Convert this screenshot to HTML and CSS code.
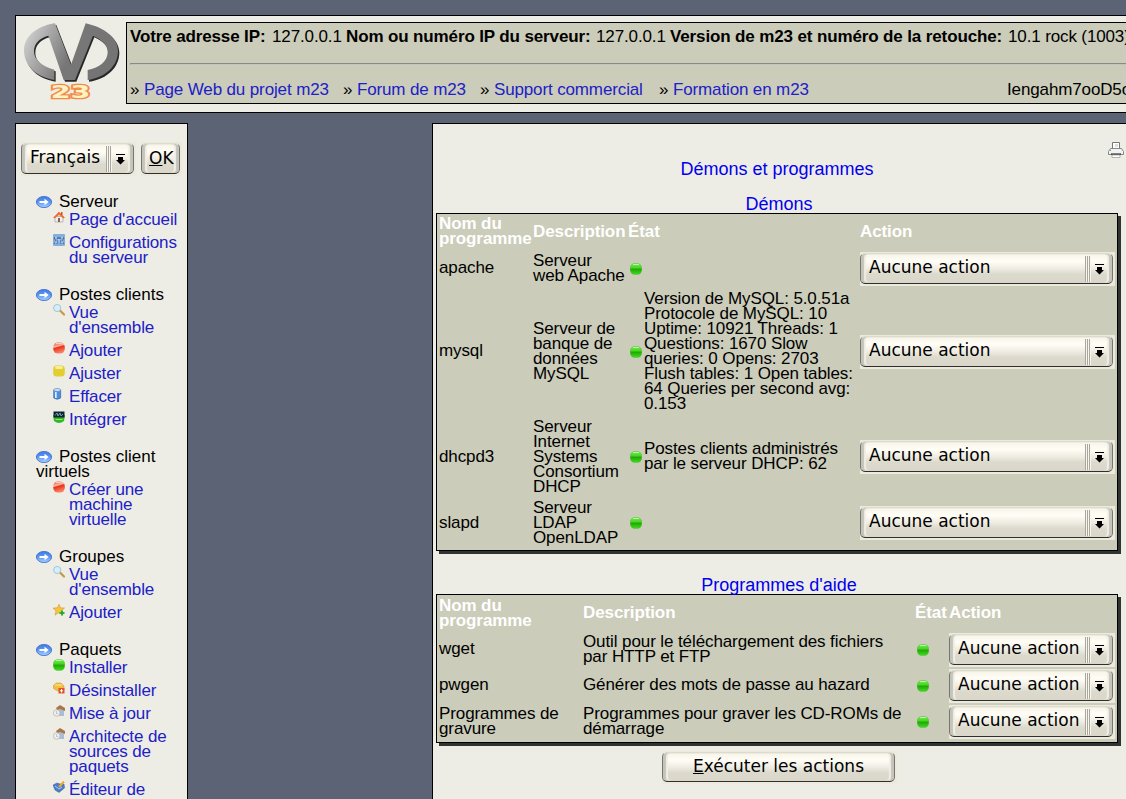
FILE: index.html
```html
<!DOCTYPE html>
<html lang="fr">
<head>
<meta charset="utf-8">
<title>m23 - Démons et programmes</title>
<link rel="stylesheet" href="styles.css">
</head>
<body>
<svg width="0" height="0" class="defs">
  <defs>
    <linearGradient id="gg" x2="0" y2="1"><stop offset="0" stop-color="#7be85e"/><stop offset=".42" stop-color="#45d41c"/><stop offset=".5" stop-color="#1fa604"/><stop offset="1" stop-color="#42dc22"/></linearGradient>
    <linearGradient id="rg" x2=".3" y2="1"><stop offset="0" stop-color="#e8553c"/><stop offset=".42" stop-color="#f6b5a6"/><stop offset=".52" stop-color="#ee3013"/><stop offset="1" stop-color="#f6836b"/></linearGradient>
    <linearGradient id="bg" x2="0" y2="1"><stop offset="0" stop-color="#3f7ce8"/><stop offset=".5" stop-color="#5b96f4"/><stop offset="1" stop-color="#a9d4ff"/></linearGradient>
    <linearGradient id="lg" x2="1" y2=".3"><stop offset="0" stop-color="#dcdcdc"/><stop offset=".3" stop-color="#a8a8a8"/><stop offset=".6" stop-color="#777"/><stop offset="1" stop-color="#747474"/></linearGradient>
    <symbol id="arrow" viewBox="0 0 16 12"><ellipse cx="8" cy="6" rx="7.6" ry="5.6" fill="url(#bg)" stroke="#3566c4" stroke-width=".8"/><path d="M3.500 5h5V2.800L12.700 6 8.500 9.200V7h-5z" fill="#fff"/></symbol>
    <symbol id="green" viewBox="0 0 12 12"><rect x=".2" y=".4" width="11.600" height="11.200" rx="4.800" fill="url(#gg)" stroke="#3cbf22" stroke-width=".4"/><path d="M3 1.500h6" stroke="#b5f5a4"/></symbol>
    <symbol id="red" viewBox="0 0 12 12"><rect x=".2" y=".4" width="11.600" height="11.200" rx="4.800" fill="url(#rg)"/><path d="M3 1.500h6" stroke="#f9c9be"/></symbol>
    <symbol id="yellow" viewBox="0 0 12 12"><rect x=".2" y=".4" width="11.600" height="11.200" rx="3.500" fill="#e2ce2f"/><rect x="2" y="1" width="8" height="3" rx="1.500" fill="#f4eca0"/></symbol>
    <symbol id="home" viewBox="0 0 12 12"><path d="M2 5.500h8V11H2z" fill="#eee" stroke="#999" stroke-width=".6"/><path d="M.5 6.500 6 1l5.500 5.500-1.300.6L6 3.500 1.800 7.100z" fill="#ee6a32" stroke="#ee6a32" stroke-width=".6"/><path d="M8 1h1.500v3H8z" fill="#d5501c"/><path d="M5 7h2v4H5z" fill="#865"/></symbol>
    <symbol id="config" viewBox="0 0 12 12"><rect width="12" height="12" rx="1" fill="#86aedb"/><path d="M1 10 3 7 1 4l2-2 2 3 1-2 1 2 2-3 2 2-2 3 2 3M4 10V7h4v3" fill="none" stroke="#476da6"/><path d="M2 3h2M8 3h2M2 8h2M8 8h2M6 5v3" stroke="#dfeeff"/></symbol>
    <symbol id="lens" viewBox="0 0 12 12"><path d="m7 6.500 4 4" stroke="#c99447" stroke-width="2.200" stroke-linecap="round"/><circle cx="4.200" cy="4" r="3.600" fill="#d2effc" stroke="#a5bccd" stroke-width=".9"/></symbol>
    <symbol id="bin" viewBox="0 0 12 12"><path d="M.7 2v8q3.400 2.500 7 0V2z" fill="#4e8ee0" stroke="#315b9e" stroke-width=".6"/><path d="M2 4h1.700v6H2z" fill="#d9efff"/><ellipse cx="4.200" cy="2" rx="3.500" ry="1.500" fill="#cde2f6" stroke="#4977b1" stroke-width=".6"/></symbol>
    <symbol id="robot" viewBox="0 0 12 12"><path d="M0 4h12L11 10Q6 14 1 10z" fill="#31b62a"/><path d="M.5.5h11v6h-11z" fill="#123"/><path d="M2 4.500 4 2l1 3 2-3 1 3 2-2" fill="none" stroke="#6fa4b4"/><path d="M2.500 8.500h7" stroke="#8ced4e"/></symbol>
    <symbol id="star" viewBox="0 0 12 12"><path d="m6 .3 1.500 3.500 4 .2-3 2.600 1 4L6 8.500l-4 2.600 1-4.200L0 4.100l4.300-.3z" fill="#f5c63b" stroke="#c29030" stroke-width=".5"/><path d="M9 6.500v5M6.500 9h5" stroke="#2dac27" stroke-width="2"/></symbol>
    <symbol id="remove" viewBox="0 0 12 12"><path d="M0 4 3 1h5l3 3v4l-6 1-4-2z" fill="#f0bf43" stroke="#c99321" stroke-width=".5"/><path d="M2 3h7" stroke="#ffe791"/><path d="M5.500 6h6v5.500h-6z" fill="#e0522e"/><path d="M8.500 7v3.500M7 8.800h3" stroke="#fff"/></symbol>
    <symbol id="box" viewBox="0 0 12 12"><path d="M5 4h6v7H5z" fill="#a9bdd8"/><path d="m3 3 4-3 5 3v3L7 4 4 5z" fill="#a97646"/><circle cx="3.700" cy="8" r="3.300" fill="#eee" stroke="#aaa" stroke-width=".6"/><path d="M3.500 6v2.500h1.600" fill="none" stroke="#aaa" stroke-width=".6"/></symbol>
    <symbol id="edit" viewBox="0 0 12 12"><path d="m0 4 4-2 3 1 4 0 .5 4L6 11.500 2 9z" fill="#4d7dc6" stroke="#345a96" stroke-width=".5"/><path d="m2 5 4 3 3-2" fill="none" stroke="#a7cafa"/><path d="M6 6 11 .5" stroke="#f1a52b" stroke-width="2"/></symbol>
  </defs>
</svg>
<header class="top">
  <svg class="logo" viewBox="0 0 345 285">
    <defs><path id="mark" d="M118 25C60 35 27 68 27 106C27 150 60 185 118 195V164C80 154 57 134 57 109C57 86 72 70 100 62L146 195H180L234 62C263 75 278 92 278 112C278 140 250 160 218 165V195C275 187 309 150 309 108C309 70 270 38 212 25L168 149L120 25Z"/></defs>
    <use href="#mark" x="4" y="5" fill="#282828"/><use href="#mark" fill="url(#lg)"/>
    <text class="logo-number" x="107" y="248" textLength="119" lengthAdjust="spacingAndGlyphs">23</text>
  </svg>
  <div class="info">
    <div class="server"><b class="w142">Votre adresse IP:</b><span class="w74">127.0.0.1</span><b class="w250">Nom ou numéro IP du serveur:</b><span class="w74">127.0.0.1</span><b class="w338">Version de m23 et numéro de la retouche:</b><span>10.1 rock (1003)</span></div>
    <hr>
    <nav class="links"><span class="w213">» <a>Page Web du projet m23</a></span><span class="w137">» <a>Forum de m23</a></span><span class="w179">» <a>Support commercial</a></span><span class="w348">» <a>Formation en m23</a></span><span>Iengahm7ooD5oo</span></nav>
  </div>
</header>
<div class="body">
  <aside class="side">
    <div class="lang">
      <div class="select lang-select"><span class="button"><span class="label">Français</span><svg class="grip" viewBox="0 0 28 31"><path d="M.5 3v26M2.500 3v26M4.500 3v26" stroke="#a8a69d"/><path d="M1.500 3v26M3.500 3v26M5.500 3v26" stroke="#f8f6ee"/><path d="M10 11h9v1h-9zM12 14h5v3h2l-4.500 4.500L10 17h2z"/></svg></span></div>
      <div class="select ok"><span class="button"><span class="label"><u>O</u>K</span></span></div>
    </div>
    <section><h3><svg><use href="#arrow"/></svg>Serveur</h3><ul>
      <li><svg><use href="#home"/></svg><a>Page d'accueil</a></li>
      <li><svg><use href="#config"/></svg><a>Configurations<br>du serveur</a></li></ul></section>
    <section><h3><svg><use href="#arrow"/></svg>Postes clients</h3><ul>
      <li><svg><use href="#lens"/></svg><a>Vue<br>d'ensemble</a></li>
      <li><svg><use href="#red"/></svg><a>Ajouter</a></li>
      <li><svg><use href="#yellow"/></svg><a>Ajuster</a></li>
      <li><svg><use href="#bin"/></svg><a>Effacer</a></li>
      <li><svg><use href="#robot"/></svg><a>Intégrer</a></li></ul></section>
    <section><h3><svg><use href="#arrow"/></svg>Postes client<br>virtuels</h3><ul>
      <li><svg><use href="#red"/></svg><a>Créer une<br>machine<br>virtuelle</a></li></ul></section>
    <section><h3><svg><use href="#arrow"/></svg>Groupes</h3><ul>
      <li><svg><use href="#lens"/></svg><a>Vue<br>d'ensemble</a></li>
      <li><svg><use href="#star"/></svg><a>Ajouter</a></li></ul></section>
    <section><h3><svg><use href="#arrow"/></svg>Paquets</h3><ul>
      <li><svg><use href="#green"/></svg><a>Installer</a></li>
      <li><svg><use href="#remove"/></svg><a>Désinstaller</a></li>
      <li><svg><use href="#box"/></svg><a>Mise à jour</a></li>
      <li><svg><use href="#box"/></svg><a>Architecte de<br>sources de<br>paquets</a></li>
      <li><svg><use href="#edit"/></svg><a>Éditeur de<br>paquets</a></li></ul></section>
  </aside>
  <main class="main">
    <svg class="printer" viewBox="0 0 16 16"><path d="M4.500.5h7V7h-7z" fill="#fff" stroke="#777"/><path d="M7 2h3v3H7z" fill="#ddd"/><path d="M2.500 6.500h11l2 3v3H.5v-3z" fill="#f2f2f2" stroke="#888"/><path d="M3 12h10" stroke="#111"/><path d="M4 13h8v2.500H4z" fill="#fff" stroke="#999" stroke-width=".7"/><path d="M2 8h1v1H2z" fill="#4c3"/></svg>
    <h1>Démons et programmes</h1>
    <h2 class="first">Démons</h2>
    <div class="table daemons">
      <div class="row head"><span>Nom du<br>programme</span><span>Description</span><span>État</span><span></span><span>Action</span></div>
      <div class="row"><span>apache</span><span>Serveur<br>web Apache</span><svg class="dot"><use href="#green"/></svg><span></span><div class="select"><span class="button"><span class="label">Aucune action</span><svg class="grip" viewBox="0 0 28 31"><path d="M.5 3v26M2.500 3v26M4.500 3v26" stroke="#a8a69d"/><path d="M1.500 3v26M3.500 3v26M5.500 3v26" stroke="#f8f6ee"/><path d="M10 11h9v1h-9zM12 14h5v3h2l-4.500 4.500L10 17h2z"/></svg></span></div></div>
      <div class="row"><span>mysql</span><span>Serveur de<br>banque de<br>données<br>MySQL</span><svg class="dot"><use href="#green"/></svg><span>Version de MySQL: 5.0.51a<br>Protocole de MySQL: 10<br>Uptime: 10921 Threads: 1<br>Questions: 1670 Slow<br>queries: 0 Opens: 2703<br>Flush tables: 1 Open tables:<br>64 Queries per second avg:<br>0.153</span><div class="select"><span class="button"><span class="label">Aucune action</span><svg class="grip" viewBox="0 0 28 31"><path d="M.5 3v26M2.500 3v26M4.500 3v26" stroke="#a8a69d"/><path d="M1.500 3v26M3.500 3v26M5.500 3v26" stroke="#f8f6ee"/><path d="M10 11h9v1h-9zM12 14h5v3h2l-4.500 4.500L10 17h2z"/></svg></span></div></div>
      <div class="row raised"><span>dhcpd3</span><span>Serveur<br>Internet<br>Systems<br>Consortium<br>DHCP</span><svg class="dot"><use href="#green"/></svg><span>Postes clients administrés<br>par le serveur DHCP: 62</span><div class="select"><span class="button"><span class="label">Aucune action</span><svg class="grip" viewBox="0 0 28 31"><path d="M.5 3v26M2.500 3v26M4.500 3v26" stroke="#a8a69d"/><path d="M1.500 3v26M3.500 3v26M5.500 3v26" stroke="#f8f6ee"/><path d="M10 11h9v1h-9zM12 14h5v3h2l-4.500 4.500L10 17h2z"/></svg></span></div></div>
      <div class="row raised"><span>slapd</span><span>Serveur<br>LDAP<br>OpenLDAP</span><svg class="dot"><use href="#green"/></svg><span></span><div class="select"><span class="button"><span class="label">Aucune action</span><svg class="grip" viewBox="0 0 28 31"><path d="M.5 3v26M2.500 3v26M4.500 3v26" stroke="#a8a69d"/><path d="M1.500 3v26M3.500 3v26M5.500 3v26" stroke="#f8f6ee"/><path d="M10 11h9v1h-9zM12 14h5v3h2l-4.500 4.500L10 17h2z"/></svg></span></div></div>
    </div>
    <h2 class="second">Programmes d'aide</h2>
    <div class="table helpers">
      <div class="row head"><span>Nom du<br>programme</span><span>Description</span><span>État</span><span>Action</span></div>
      <div class="row"><span>wget</span><span>Outil pour le téléchargement des fichiers<br>par HTTP et FTP</span><svg class="dot"><use href="#green"/></svg><div class="select"><span class="button"><span class="label">Aucune action</span><svg class="grip" viewBox="0 0 28 31"><path d="M.5 3v26M2.500 3v26M4.500 3v26" stroke="#a8a69d"/><path d="M1.500 3v26M3.500 3v26M5.500 3v26" stroke="#f8f6ee"/><path d="M10 11h9v1h-9zM12 14h5v3h2l-4.500 4.500L10 17h2z"/></svg></span></div></div>
      <div class="row"><span>pwgen</span><span>Générer des mots de passe au hazard</span><svg class="dot"><use href="#green"/></svg><div class="select"><span class="button"><span class="label">Aucune action</span><svg class="grip" viewBox="0 0 28 31"><path d="M.5 3v26M2.500 3v26M4.500 3v26" stroke="#a8a69d"/><path d="M1.500 3v26M3.500 3v26M5.500 3v26" stroke="#f8f6ee"/><path d="M10 11h9v1h-9zM12 14h5v3h2l-4.500 4.500L10 17h2z"/></svg></span></div></div>
      <div class="row"><span>Programmes de<br>gravure</span><span>Programmes pour graver les CD-ROMs de<br>démarrage</span><svg class="dot"><use href="#green"/></svg><div class="select"><span class="button"><span class="label">Aucune action</span><svg class="grip" viewBox="0 0 28 31"><path d="M.5 3v26M2.500 3v26M4.500 3v26" stroke="#a8a69d"/><path d="M1.500 3v26M3.500 3v26M5.500 3v26" stroke="#f8f6ee"/><path d="M10 11h9v1h-9zM12 14h5v3h2l-4.500 4.500L10 17h2z"/></svg></span></div></div>
    </div>
    <div class="select run"><span class="button"><span class="label"><u>E</u>xécuter les actions</span></span></div>
  </main>
</div>
</body>
</html>
```
FILE: styles.css
```css
* { box-sizing: border-box; }
html { overflow: hidden; }
body {
  margin: 0;
  padding: 15px 0 0 15px;
  height: 799px;
  overflow: hidden;
  background: #5b6374;
  color: #000;
  font: 17px/15px "Liberation Sans", Arial, sans-serif;
  letter-spacing: -.1px;
  white-space: nowrap;
}
.defs { position: absolute; }
a { color: #2020c8; }
svg { display: block; flex: none; }
h1, h2, h3, ul { margin: 0; padding: 0; font-weight: normal; }

.top {
  display: flex;
  width: 1130px;
  height: 98px;
  border: 1px solid #000;
  background: #eeede5;
  letter-spacing: -.13px;
}
.logo { width: 115px; height: 95px; margin: -1px 0 0 -1px; }
.logo-number {
  font: bold 54px "DejaVu Sans", sans-serif;
  letter-spacing: 0;
  fill: #fff3bf;
  stroke: #f28a4c;
  stroke-width: 8px;
  paint-order: stroke;
}
.info {
  width: 1020px;
  height: 82px;
  margin: 6px 0 0 -4px;
  padding: 6px 3px 0;
  border: 1px solid #000;
  background: #cbccb9;
}
.server, .links { display: flex; }
.info hr { height: 2px; margin: 19px 0 17px; border: 1px solid #888a8a; border-width: 1px 0 0 1px; border-bottom: 1px solid #c3c4c0; }
.server > *, .links > * { flex: none; }
.w142 { width: 142px; }
.w74 { width: 74px; }
.w250 { width: 250px; }
.w338 { width: 338px; }
.w213 { width: 213px; }
.w137 { width: 137px; }
.w179 { width: 179px; }
.w348 { width: 348px; }

.body {
  display: flex;
  gap: 244px;
  height: 720px;
  margin-top: 10px;
}
.side {
  flex: none;
  width: 173px;
  border: 1px solid #000;
  background: #eeede5;
  letter-spacing: -.13px;
}
.lang {
  display: flex;
  gap: 5px;
  padding: 18px 0 0 5px;
  margin-bottom: 18px;
}
.side section { padding-left: 20px; margin-bottom: 22px; }
.side h3 { font-size: 17px; line-height: 15px; letter-spacing: 0; }
.side h3 svg { display: inline-block; width: 16px; height: 12px; margin: 0 7px 0 0; vertical-align: -1px; }
.side ul {
  display: flex;
  flex-direction: column;
  gap: 8px;
  margin-top: 3px;
  padding-left: 17px;
  list-style: none;
}
.side li { display: flex; gap: 4px; }
.side li svg { width: 12px; height: 12px; margin-top: -1px; }

.select {
  height: 34px;
  padding: 1px 2px 2px 0;
  background: #ece9dd;
}
.button {
  display: flex;
  height: 31px;
  border: 1px solid #77756e;
  border-top-color: #dddace;
  border-bottom: 1px solid #2f2f2f;
  border-radius: 5px;
  background: linear-gradient(#f7f4e9 0, #fffdf5 25%, #efede3 50%, #dcd9cd 70%, #dad7ca 100%);
  box-shadow: inset 3px 0 1px #c5c4ba, inset -3px 0 1px #c5c4ba, inset 5px 0 1px #f1efe6, inset -5px 0 1px #f1efe6;
  font: 17px/27px "DejaVu Sans", sans-serif;
  letter-spacing: 0;
}
.label { flex: 1; padding-left: 8px; }
.grip { width: 28px; height: 31px; margin-top: -1px; margin-right: -1px; }
.lang-select { width: 115px; }
.ok { width: 41px; }
.ok .label { padding-left: 7px; line-height: 29px; }

.main {
  flex: none;
  width: 710px;
  padding-left: 3px;
  border: 1px solid #000;
  background: #eeede5;
}
.printer { width: 16px; height: 16px; margin: 18px 0 0 672px; }
h1, h2 { width: 682px; color: #0000f0; text-align: center; letter-spacing: 0; }
h1 { margin-top: 2px; font-size: 18px; line-height: 18px; }
h2 { font-size: 18px; line-height: 18px; }
.first { margin-top: 17px; padding-left: 4px; }
.second { margin-top: 25px; padding-left: 4px; }
.table {
  width: 682px;
  border: 1px solid #000;
  background: #cbccb9;
  box-shadow: 3px 3px 0 #303332;
}
.row { display: grid; align-items: center; padding-left: 2px; }
.head { color: #fff; font-weight: bold; }
.dot { width: 12px; height: 12px; margin: 2px 0 0 2px; }
.daemons { display: grid; height: 338px; grid-template-rows: 34px 39px 127px 84px 48px; }
.daemons .row { grid-template-columns: 94px 95px 16px 216px 255px; }
.daemons .select { margin-top: 3px; }
.daemons .raised .select { margin-top: 1px; }
.helpers { display: grid; height: 149px; grid-template-rows: 35px 36px 36px 36px; }
.helpers .row { grid-template-columns: 144px 332px 34px 166px; }
.helpers .select { margin-top: 3px; }
.run { width: 235px; height: 33px; margin: 8px 0 0 226px; }
.run .button { height: 30px; }
.run .label { padding: 0; text-align: center; }
```
